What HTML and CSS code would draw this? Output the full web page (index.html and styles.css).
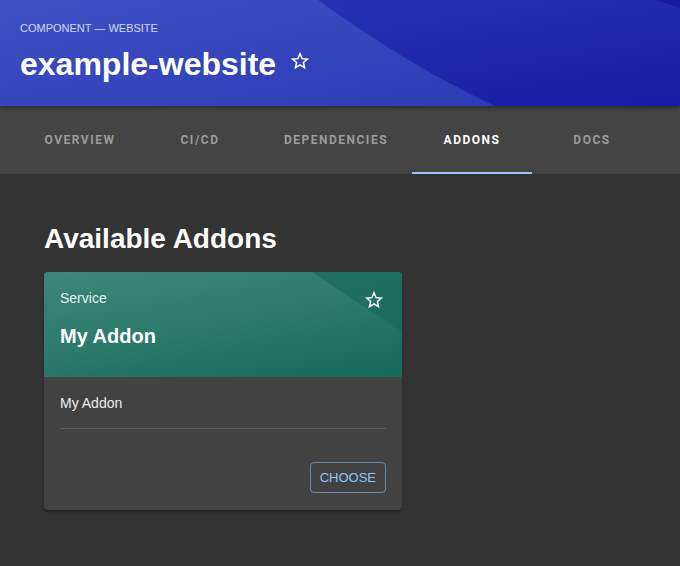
FILE: index.html
```html
<!DOCTYPE html>
<html>
<head>
<meta charset="utf-8">
<link rel="stylesheet" href="styles.css">
</head>
<body>
<header class="hero">
  <svg class="hero-bg" viewBox="0 0 680 106" preserveAspectRatio="none" aria-hidden="true">
    <defs>
      <linearGradient id="hg" x1="0" y1="0" x2="1" y2="1">
        <stop offset="0" stop-color="#4151c4"/>
        <stop offset="1" stop-color="#2a3bb5"/>
      </linearGradient>
      <linearGradient id="hg2" x1="0" y1="0" x2="1" y2="1">
        <stop offset="0" stop-color="#2b37b8"/>
        <stop offset="1" stop-color="#1a1ca6"/>
      </linearGradient>
    </defs>
    <rect width="680" height="106" fill="url(#hg2)"/>
    <path d="M0 0 H318 C380 45 440 80 495 106 H0 Z" fill="url(#hg)"/>
    <path d="M655 0 H680 V8 Z" fill="#1a18a0"/>
  </svg>
  <div class="hero-inner">
    <div class="crumb">COMPONENT — WEBSITE</div>
    <div class="title-row">
      <h1 class="title">example-website</h1>
      <svg class="star" viewBox="0 0 24 24" aria-hidden="true"><path d="M22 9.24l-7.19-.62L12 2 9.19 8.63 2 9.24l5.46 4.73L5.82 21 12 17.27 18.18 21l-1.630-7.03L22 9.24zM12 15.4l-3.76 2.27 1-4.28-3.32-2.88 4.38-.38L12 6.1l1.71 4.04 4.38.38-3.32 2.880 1 4.28L12 15.4z"/></svg>
    </div>
  </div>
</header>
<nav class="tabs">
  <div class="tab">OVERVIEW</div>
  <div class="tab">CI/CD</div>
  <div class="tab">DEPENDENCIES</div>
  <div class="tab active">ADDONS</div>
  <div class="tab">DOCS</div>
</nav>
<main class="content">
  <h2 class="section-title">Available Addons</h2>
  <div class="card">
    <div class="card-head">
      <svg class="card-bg" viewBox="0 0 358 105" preserveAspectRatio="none" aria-hidden="true">
        <path d="M268 0 H358 V60 Z" fill="#1b6b5e" opacity="0.75"/>
      </svg>
      <div class="card-head-inner">
        <div class="kind">Service</div>
        <div class="card-title">My Addon</div>
      </div>
      <svg class="card-star" viewBox="0 0 24 24" aria-hidden="true"><path d="M22 9.24l-7.19-.62L12 2 9.19 8.63 2 9.24l5.46 4.73L5.82 21 12 17.27 18.18 21l-1.63-7.03L22 9.24zM12 15.4l-3.76 2.27 1-4.28-3.32-2.88 4.38-.38L12 6.1l1.71 4.04 4.38.38-3.32 2.88 1 4.28L12 15.4z"/></svg>
    </div>
    <div class="card-body">
      <div class="desc">My Addon</div>
      <hr class="divider">
    </div>
    <div class="card-actions">
      <button class="btn">CHOOSE</button>
    </div>
  </div>
</main>
</body>
</html>
```

FILE: styles.css
```css
* { box-sizing: border-box; }
html, body { margin: 0; padding: 0; }
body {
  background: #333333;
  font-family: "Liberation Sans", Arial, sans-serif;
  color: #fff;
  width: 680px;
  height: 566px;
  overflow: hidden;
}
.hero {
  position: relative;
  height: 106px;
  overflow: hidden;
  z-index: 2;
  box-shadow: 0 2px 4px rgba(0,0,0,0.35);
}
.hero-bg {
  position: absolute;
  left: 0; top: 0;
  width: 100%; height: 100%;
}
.hero-inner {
  position: relative;
  padding: 22px 20px 0 20px;
}
.crumb {
  font-size: 11px;
  line-height: 13px;
  color: rgba(255,255,255,0.78);
}
.title-row {
  display: flex;
  align-items: center;
  margin-top: 10px;
}
.title {
  margin: 0;
  font-size: 32px;
  line-height: 38px;
  font-weight: 700;
}
.star {
  width: 22px;
  height: 22px;
  fill: #fff;
  margin-left: 13px;
  margin-top: -6px;
}
.tabs {
  display: flex;
  background: #444444;
  height: 68px;
  padding-left: 20px;
}
.tab {
  min-width: 120px;
  padding: 0 24px;
  display: flex;
  align-items: center;
  justify-content: center;
  font-size: 12px;
  font-weight: 700;
  letter-spacing: 1.5px;
  color: #9a9a9a;
  font-family: Roboto, "Liberation Sans", sans-serif;
}
.tab.active {
  color: #fff;
  border-bottom: 2px solid #9cc5f2;
  padding-top: 2px;
}
.content {
  padding: 48px 44px;
}
.section-title {
  margin: 0 0 16px 0;
  font-size: 28px;
  line-height: 34px;
  font-weight: 700;
}
.card {
  width: 358px;
  background: #424242;
  border-radius: 4px;
  overflow: hidden;
  box-shadow: 0 2px 2px rgba(0,0,0,0.3);
}
.card-head {
  position: relative;
  height: 105px;
  background: linear-gradient(170deg, #3e877a 0%, #2b7a6c 50%, #17695b 100%);
}
.card-bg {
  position: absolute;
  left: 0; top: 0;
  width: 100%; height: 100%;
}
.card-head-inner {
  position: relative;
  padding: 18px 16px 0 16px;
}
.kind {
  font-size: 14px;
  line-height: 16px;
  color: rgba(255,255,255,0.9);
}
.card-title {
  margin-top: 18px;
  font-size: 20px;
  line-height: 24px;
  font-weight: 700;
}
.card-star {
  position: absolute;
  right: 17px;
  top: 17px;
  width: 22px;
  height: 22px;
  fill: #fff;
}
.card-body {
  padding: 17px 16px 0 16px;
}
.desc {
  font-size: 14px;
  line-height: 18px;
  color: #eee;
}
.divider {
  border: 0;
  border-top: 1px solid #5c5c5c;
  margin: 16px 0 0 0;
}
.card-actions {
  display: flex;
  justify-content: flex-end;
  padding: 33px 16px 17px 16px;
}
.btn {
  font-family: "Liberation Sans", Arial, sans-serif;
  font-size: 13px;
  color: #90c3f7;
  background: transparent;
  border: 1px solid rgba(144,195,247,0.5);
  border-radius: 4px;
  height: 31px;
  padding: 0 9px;
}
```
